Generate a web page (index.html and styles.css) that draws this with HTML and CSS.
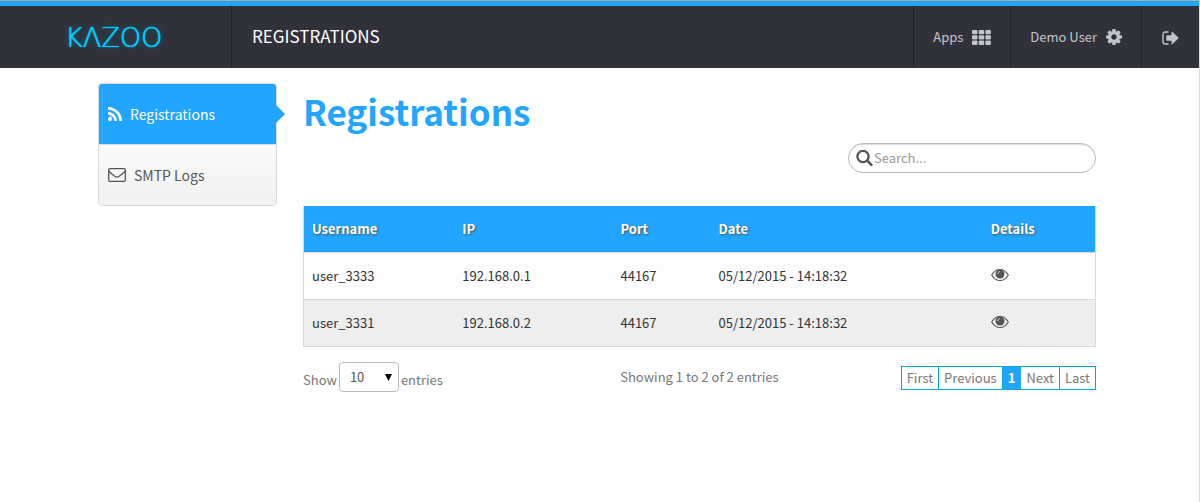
FILE: index.html
```html
<!DOCTYPE html>
<html lang="en">
<head>
<meta charset="utf-8">
<title>Registrations</title>
<meta name="viewport" content="width=device-width, initial-scale=1">
<link rel="stylesheet" href="styles.css">
</head>
<body>
<svg class="sprite" aria-hidden="true">
  <symbol id="eye" viewBox="0 0 18 14">
    <path d="M.7 7Q4 1.500 9 1.500T17.300 7Q14 12.500 9 12.500T.7 7Z" fill="none" stroke="currentColor" stroke-width="1.200"/>
    <circle cx="9" cy="6" r="4.500" fill="currentColor"/>
    <path d="M6.700 5.600Q6.900 3.800 8.600 3.500" fill="none" stroke="#fff" stroke-width="0.700" stroke-linecap="round"/>
  </symbol>
</svg>
<header class="topbar">
  <a class="logo" href="#" aria-label="Kazoo">KΛZOO</a>
  <div class="app-title">REGISTRATIONS</div>
  <nav class="topnav">
    <a class="topnav-link" href="#">Apps
      <svg class="icon-apps" width="19" height="15" viewBox="0 0 19 15" fill="currentColor" aria-hidden="true">
        <rect x="0" y="0" width="5.500" height="4.300" rx="1"/><rect x="6.700" y="0" width="5.500" height="4.300" rx="1"/><rect x="13.400" y="0" width="5.500" height="4.300" rx="1"/>
        <rect x="0" y="5.300" width="5.500" height="4.300" rx="1"/><rect x="6.700" y="5.300" width="5.500" height="4.300" rx="1"/><rect x="13.400" y="5.300" width="5.500" height="4.300" rx="1"/>
        <rect x="0" y="10.600" width="5.500" height="4.300" rx="1"/><rect x="6.700" y="10.600" width="5.500" height="4.300" rx="1"/><rect x="13.400" y="10.600" width="5.500" height="4.300" rx="1"/>
      </svg>
    </a>
    <a class="topnav-link" href="#">Demo User
      <svg width="16" height="16" viewBox="128 128 1536 1536" fill="currentColor" aria-hidden="true"><path d="M1152 896q0-106-75-181t-181-75-181 75-75 181 75 181 181 75 181-75 75-181zm512-109v222q0 12-8 23t-20 13l-185 28q-19 54-39 91 35 50 107 138 10 12 10 25t-9 23q-27 37-99 108t-94 71q-12 0-26-9l-138-108q-44 23-91 38-16 136-29 186-7 28-36 28h-222q-14 0-24.500-8.500t-11.500-21.500l-28-184q-49-16-90-37l-141 107q-10 9-25 9-14 0-25-11-126-114-165-168-7-10-7-23 0-12 8-23 15-21 51-66.500t54-70.500q-27-50-41-99l-183-27q-13-2-21-12.500t-8-23.500v-222q0-12 8-23t19-13l186-28q14-46 39-92-40-57-107-138-10-12-10-24 0-10 9-23 26-36 98.500-107.500t94.500-71.500q13 0 26 10l138 107q44-23 91-38 16-136 29-186 7-28 36-28h222q14 0 24.500 8.500t11.500 21.500l28 184q49 16 90 37l142-107q9-9 24-9 13 0 25 10 129 119 165 170 7 8 7 22 0 12-8 23-15 21-51 66.500t-54 70.500q26 50 41 98l183 28q13 2 21 12.500t8 23.500z"/></svg>
    </a>
    <a class="topnav-link topnav-logout" href="#" aria-label="Log out">
      <svg width="17" height="14" viewBox="0 0 17 14" fill="currentColor" aria-hidden="true"><path d="M6.500 1H3.500Q1 1 1 3.500V10.500Q1 13 3.500 13H6.500" fill="none" stroke="currentColor" stroke-width="1.400"/><path d="M5 4.300H9.500V1.400Q9.500.2 10.500 1L16.300 6.500Q16.700 7 16.300 7.500L10.500 13Q9.500 13.800 9.500 12.600V9.700H5Q4.300 9.700 4.300 9V5Q4.300 4.300 5 4.300Z"/></svg>
    </a>
  </nav>
</header>
<div class="layout">
  <nav class="sidebar">
    <a class="side-link side-link-active" href="#" aria-current="page">
      <svg width="14" height="14" viewBox="192 128 1408 1408" fill="currentColor" aria-hidden="true"><path d="M576 1344q0 80-56 136t-136 56-136-56-56-136 56-136 136-136 136 56 56 136zm512 123q2 28-17 48-18 21-47 21h-135q-25 0-43-16.500t-20-41.500q-22-229-184.500-391.500t-391.500-184.500q-25-2-41.500-20t-16.500-43v-135q0-29 21-47 17-17 43-17h5q160 13 306 80.500t259 181.500q114 113 181.500 259t80.500 306zm512 2q2 27-18 47-18 20-46 20h-143q-26 0-44.500-17.500t-19.500-42.500q-12-215-101-408.500t-231.500-336-336-231.500-408.500-102q-25-1-42.500-19.500t-17.500-43.500v-143q0-28 20-46 18-18 44-18h3q262 13 501.500 120t425.500 294q187 186 294 425.500t120 501.500z"/></svg>
      Registrations
    </a>
    <a class="side-link" href="#">
      <svg width="18" height="14" viewBox="0 0 18 14" fill="none" stroke="currentColor" stroke-width="1.300" aria-hidden="true"><rect x=".7" y=".7" width="16.600" height="12.600" rx="1.200"/><path d="M.8 3.200Q3 5.400 6.800 8.300Q9 10 11.200 8.300Q15 5.400 17.200 3.200"/></svg>
      SMTP Logs
    </a>
  </nav>
  <main class="content">
    <h1 class="heading">Registrations</h1>
    <label class="search">
      <svg width="17" height="17" viewBox="0 0 17 17" fill="none" stroke="currentColor" aria-hidden="true"><circle cx="7" cy="6.500" r="5.600" stroke-width="2.300"/><path d="M11.200 10.700L15.400 14.900" stroke-width="2.600" stroke-linecap="round"/></svg>
      <input class="search-input" type="text" placeholder="Search..." aria-label="Search">
    </label>
    <table class="grid">
      <colgroup><col class="col-user"><col class="col-ip"><col class="col-port"><col class="col-date"><col></colgroup>
      <thead>
        <tr><th>Username</th><th>IP</th><th>Port</th><th>Date</th><th>Details</th></tr>
      </thead>
      <tbody>
        <tr><td>user_3333</td><td>192.168.0.1</td><td>44167</td><td>05/12/2015 - 14:18:32</td><td><button class="eye" type="button" aria-label="Show details"><svg width="18" height="14"><use href="#eye"/></svg></button></td></tr>
        <tr><td>user_3331</td><td>192.168.0.2</td><td>44167</td><td>05/12/2015 - 14:18:32</td><td><button class="eye" type="button" aria-label="Show details"><svg width="18" height="14"><use href="#eye"/></svg></button></td></tr>
      </tbody>
    </table>
    <div class="grid-footer">
      <label class="length"><span class="length-text">Show</span>
        <span class="select-wrap">
          <select class="select"><option>10</option><option>25</option><option>50</option></select>
          <svg class="select-arrow" width="7" height="7" viewBox="0 0 7 7" aria-hidden="true"><path d="M0 0H7L3.500 7Z"/></svg>
        </span>
        <span class="length-text">entries</span></label>
      <div class="info">Showing 1 to 2 of 2 entries</div>
      <div class="pages">
        <button class="page" type="button">First</button>
        <button class="page" type="button">Previous</button>
        <button class="page page-current" type="button">1</button>
        <button class="page" type="button">Next</button>
        <button class="page" type="button">Last</button>
      </div>
    </div>
  </main>
</div>
</body>
</html>
```
FILE: styles.css
```css
* { box-sizing: border-box; }
body {
  margin: 0;
  min-height: 100vh;
  border-top: 1px solid #a9a9a9;
  border-right: 1px solid #dcdcdc;
  background: #fff;
  color: #333;
  font: 13px/20px "Noto Sans CJK SC", "Noto Sans", sans-serif;
}
a { color: inherit; text-decoration: none; }
button, input, select { font: inherit; color: inherit; }
svg { flex: none; }
.sprite { position: absolute; width: 0; height: 0; }

.topbar {
  display: flex;
  height: 67px;
  border-top: 5px solid #22a5ff;
  background: #31313a;
  color: #c4c4cc;
}
.logo {
  display: flex;
  align-items: center;
  width: 232px;
  padding: 2px 0 0 65px;
  border-right: 1px solid #22222a;
  color: #00ccff;
  font: 200 27px/32px "DejaVu Sans", sans-serif;
  text-shadow: 0 0 1px #00ccff, 0 0 1px #00ccff, 0 0 6px #007799;
}
.app-title {
  display: flex;
  align-items: center;
  padding: 0 0 2px 20px;
  color: #fff;
  font-size: 17px;
}
.topnav { display: flex; margin-left: auto; }
.topnav-link {
  display: flex;
  align-items: center;
  gap: 9px;
  padding: 0 19px;
  border-left: 1px solid #22222a;
}
.topnav-logout { padding: 2px 20px 0; }

.layout {
  display: flex;
  align-items: flex-start;
  gap: 26px;
  padding: 15px 103px 0 98px;
}
.sidebar {
  flex: none;
  width: 179px;
  border: 1px solid #d9d9d9;
  border-radius: 4px;
}
.side-link {
  position: relative;
  display: flex;
  align-items: center;
  gap: 8px;
  height: 60px;
  padding-left: 9px;
  border-radius: 0 0 3px 3px;
  background: linear-gradient(#fafafa, #f1f1f1);
  color: #555;
  font-size: 14px;
}
.side-link-active {
  height: 61px;
  border-bottom: 1px solid #d9d9d9;
  border-radius: 3px 3px 0 0;
  background: #22a5ff;
  color: #fff;
}
.side-link-active::after {
  content: "";
  position: absolute;
  top: 21px;
  left: 100%;
  border: 9px solid transparent;
  border-right: 0;
  border-left-color: #22a5ff;
}

.content { flex: 1; min-width: 0; }
.heading {
  margin: 0;
  padding-top: 4px;
  color: #22a5ff;
  font-size: 35px;
  font-weight: 700;
  line-height: 48px;
}
.search {
  display: flex;
  align-items: center;
  gap: 1px;
  width: 248px;
  height: 30px;
  margin: 8px 0 33px auto;
  padding: 0 12px 0 7px;
  border: 1px solid #bbb;
  border-radius: 15px;
  box-shadow: inset 0 1px 1px #ddd;
  color: #555;
}
.search-input {
  flex: 1;
  min-width: 0;
  padding: 0;
  border: 0;
  outline: 0;
  background: none;
}
.search-input::placeholder { color: #999; }

.grid {
  width: 100%;
  table-layout: fixed;
  border-collapse: separate;
  border-spacing: 0;
  border: 1px solid #d9d9d9;
  border-top: 0;
}
.col-user { width: 19%; }
.col-ip { width: 20%; }
.col-port { width: 12.4%; }
.col-date { width: 34.4%; }
.grid th, .grid td { padding: 0 8px; text-align: left; }
.grid th {
  height: 46px;
  background: #22a5ff;
  color: #fff;
  text-shadow: 1px 1px 2px #555;
}
.grid td {
  height: 47px;
  border-top: 1px solid #d9d9d9;
  background: #fdfdfd;
}
.grid tbody tr:nth-child(even) td { background: #eee; }
.eye {
  display: block;
  padding: 0 0 3px;
  border: 0;
  background: none;
  color: #555;
  line-height: 0;
}

.grid-footer {
  display: grid;
  grid-template-columns: 40% 1fr auto;
  align-items: center;
  padding-top: 15px;
  color: #777;
}
.length { display: flex; align-items: center; gap: 2px; }
.length-text { padding-top: 5px; }
.select-wrap { position: relative; }
.select {
  display: block;
  width: 60px;
  height: 30px;
  padding: 0 10px;
  appearance: none;
  border: 1px solid #bbb;
  border-radius: 4px;
  background: #fff;
  color: #555;
}
.select-arrow {
  position: absolute;
  top: 12px;
  right: 7px;
  pointer-events: none;
}
.pages {
  display: flex;
  margin-top: 2px;
  border: 1px solid #00a9d4;
}
.page {
  height: 22px;
  padding: 0 5px;
  border: 0;
  background: #fff;
  line-height: 22px;
}
.page + .page { border-left: 1px solid #00a9d4; }
.page-current {
  background: #22a5ff;
  color: #fff;
  font-weight: 700;
}
.page-current + .page { border-left-color: #22a5ff; }
```
